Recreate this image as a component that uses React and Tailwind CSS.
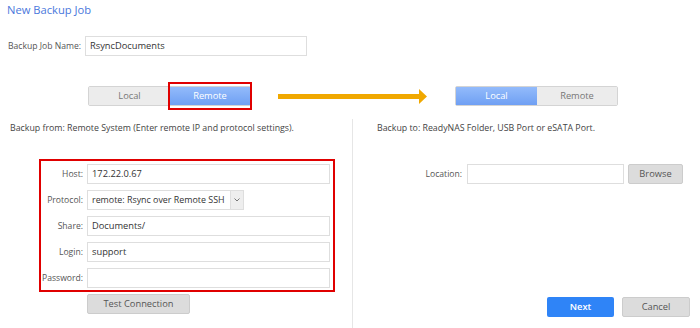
import React from "react";

const font = { fontFamily: '"Open Sans", "Noto Sans", sans-serif' };

function Field({ label, value, children }) {
  return (
    <div className="flex items-center h-[20px]">
      <div className="w-[42px] text-right text-[8.6px] text-[#555] whitespace-nowrap">{label}</div>
      <div className="ml-[4px] flex-1 flex">
        {children || (
          <div className="h-[20px] flex-1 border border-[#dedede] bg-white px-[4px] flex items-center text-[9.3px] text-[#333]">
            {value}
          </div>
        )}
      </div>
    </div>
  );
}

export default function App() {
  return (
    <div className="w-[700px] h-[328px] bg-white overflow-hidden flex flex-col" style={font}>
      <div className="h-[20px] pl-[7px] pt-[2px] text-[11.2px] leading-[16px] text-[#4a78dc]">New Backup Job</div>
      <div className="mt-[16px] flex items-center h-[20px] pl-[8px]">
        <span className="text-[8.6px] text-[#555] whitespace-nowrap">Backup Job Name:</span>
        <div className="ml-[4px] w-[222px] h-[20px] border border-[#dedede] px-[4px] flex items-center text-[9.3px] text-[#333]">
          RsyncDocuments
        </div>
      </div>
      <div className="mt-[30px] flex items-center h-[20px]">
        <div className="ml-[88px] flex h-[20px] border border-[#d4d4d4] rounded-[2px]">
          <div className="w-[81px] bg-[#ececec] text-[#777] text-[9.3px] flex items-center justify-center">Local</div>
          <div className="relative w-[80px] bg-gradient-to-b from-[#93bbfb] to-[#6f9ff3] text-white text-[9.3px] flex items-center justify-center">
            Remote
            <div className="absolute left-[-2px] right-[-2px] top-[-5px] bottom-[-5px] border-2 border-[#e00000]"></div>
          </div>
        </div>
        <div className="ml-[27px] flex items-center">
          <div className="w-[141px] h-[5px] bg-[#f0a800]"></div>
          <svg width="8" height="15" viewBox="0 0 8 15"><polygon points="0,0 8,7.5 0,15" fill="#f0a800" /></svg>
        </div>
        <div className="ml-[28px] flex h-[20px] border border-[#d4d4d4] rounded-[2px]">
          <div className="w-[81px] bg-gradient-to-b from-[#93bbfb] to-[#6f9ff3] text-white text-[9.3px] flex items-center justify-center">Local</div>
          <div className="w-[80px] bg-[#ececec] text-[#777] text-[9.3px] flex items-center justify-center">Remote</div>
        </div>
      </div>
      <div className="mt-[13px] flex flex-1">
        <div className="w-[353px] border-r border-[#e6e6e6] flex flex-col">
          <div className="pl-[10px] pt-[3px] text-[8.8px] text-[#444] leading-[12px] whitespace-nowrap">
            Backup from: Remote System (Enter remote IP and protocol settings).
          </div>
          <div className="ml-[39px] mt-[25px] w-[296px] border-2 border-[#e00000] pt-[3px] pb-[2px] pr-[3px] flex flex-col gap-[6px]">
            <Field label="Host:" value="172.22.0.67" />
            <Field label="Protocol:">
              <div className="h-[20px] w-[157px] border border-[#dedede] flex">
                <div className="flex-1 px-[4px] flex items-center text-[8.9px] text-[#333] whitespace-nowrap overflow-hidden">remote: Rsync over Remote SSH</div>
                <div className="w-[13px] bg-[#eeeeee] border-l border-[#dedede] flex items-center justify-center">
                  <svg width="6" height="4" viewBox="0 0 6 4"><polyline points="0.5,0.5 3,3 5.5,0.5" fill="none" stroke="#777" strokeWidth="1" /></svg>
                </div>
              </div>
            </Field>
            <Field label="Share:" value="Documents/" />
            <Field label="Login:" value="support" />
            <Field label="Password:" value="" />
          </div>
          <div className="ml-[87px] mt-[2px] w-[103px] h-[20px] bg-[#dcdcdc] border border-[#cccccc] rounded-[2px] flex items-center justify-center text-[9.3px] text-[#555]">
            Test Connection
          </div>
        </div>
        <div className="flex-1 flex flex-col">
          <div className="pl-[24px] pt-[3px] text-[8.8px] text-[#444] leading-[12px] whitespace-nowrap">
            Backup to: ReadyNAS Folder, USB Port or eSATA Port.
          </div>
          <div className="mt-[30px] flex items-center h-[20px]">
            <div className="w-[109px] text-right text-[8.6px] text-[#555]">Location:</div>
            <div className="ml-[5px] w-[157px] h-[20px] border border-[#dedede]"></div>
            <div className="ml-[4px] w-[55px] h-[20px] bg-[#dcdcdc] border border-[#cccccc] rounded-[2px] flex items-center justify-center text-[9.3px] text-[#555]">Browse</div>
          </div>
          <div className="mt-auto mb-[11px] flex items-center gap-[8px] pl-[194px]">
            <div className="w-[67px] h-[20px] bg-[#2f84f7] rounded-[2px] flex items-center justify-center text-white text-[9.3px] font-semibold">Next</div>
            <div className="w-[68px] h-[20px] bg-[#dcdcdc] border border-[#cccccc] rounded-[2px] flex items-center justify-center text-[9.3px] text-[#555]">Cancel</div>
          </div>
        </div>
      </div>
    </div>
  );
}
